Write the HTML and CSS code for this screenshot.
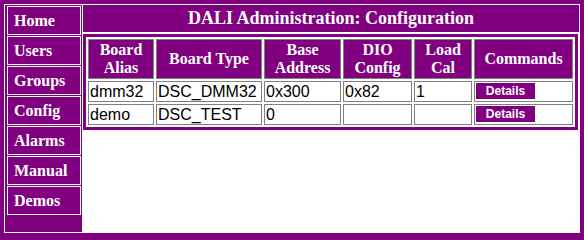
FILE: index.html
```html
<!DOCTYPE html>
<html>
<head>
<meta charset="utf-8">
<title>DALI Administration: Configuration</title>
<link rel="stylesheet" href="styles.css">
</head>
<body>
<div class="frame">
  <nav class="sidebar">
    <a class="item" href="#">Home</a>
    <a class="item" href="#">Users</a>
    <a class="item" href="#">Groups</a>
    <a class="item" href="#">Config</a>
    <a class="item" href="#">Alarms</a>
    <a class="item" href="#">Manual</a>
    <a class="item" href="#">Demos</a>
  </nav>
  <main class="main">
    <h1 class="title">DALI Administration: Configuration</h1>
    <div class="content">
      <table class="grid">
        <thead>
          <tr>
            <th class="c-alias">Board<br>Alias</th>
            <th class="c-type">Board Type</th>
            <th class="c-base">Base<br>Address</th>
            <th class="c-dio">DIO<br>Config</th>
            <th class="c-load">Load<br>Cal</th>
            <th class="c-cmd">Commands</th>
          </tr>
        </thead>
        <tbody>
          <tr>
            <td>dmm32</td>
            <td>DSC_DMM32</td>
            <td>0x300</td>
            <td>0x82</td>
            <td>1</td>
            <td><button class="details" type="button">Details</button></td>
          </tr>
          <tr>
            <td>demo</td>
            <td>DSC_TEST</td>
            <td>0</td>
            <td></td>
            <td></td>
            <td><button class="details" type="button">Details</button></td>
          </tr>
        </tbody>
      </table>
    </div>
  </main>
</div>
</body>
</html>
```

FILE: styles.css
```css
* {
  box-sizing: border-box;
}

html,
body {
  margin: 0;
}

body {
  width: 584px;
  height: 237px;
  padding: 4px;
  background: #800080;
  overflow: hidden;
}

.frame {
  display: flex;
  height: 229px;
  border: 1px solid #ffffff;
  background: #800080;
}

.sidebar {
  flex: none;
  width: 77px;
  padding: 1px 1px 0 2px;
  display: flex;
  flex-direction: column;
  gap: 1px;
}

.item {
  display: block;
  height: 29px;
  padding: 0 6px;
  border: 1px solid #ffffff;
  color: #ffffff;
  text-decoration: none;
  font: bold 16px/27px "Liberation Serif", serif;
}

.main {
  flex: 1;
  display: flex;
  flex-direction: column;
  border-left: 1px solid #ffffff;
}

.title {
  margin: 0;
  height: 27px;
  background: #800080;
  color: #ffffff;
  text-align: center;
  font: bold 18px/27px "Liberation Serif", serif;
}

.content {
  flex: 1;
  background: #ffffff;
  padding: 2px 1px 0 0;
}

.grid {
  width: 100%;
  table-layout: fixed;
  border: 3px solid #800080;
  border-spacing: 2px;
  background: #ffffff;
}

.grid th,
.grid td {
  border: 1px solid #808080;
}

.grid th {
  height: 40px;
  padding: 1px;
  background: #800080;
  color: #ffffff;
  text-align: center;
  vertical-align: middle;
  font: bold 16px/18px "Liberation Serif", serif;
}

.grid td {
  height: 21px;
  padding: 0 1px;
  color: #000000;
  text-align: left;
  vertical-align: top;
  font: 16px/19px "Liberation Sans", sans-serif;
}

.c-alias { width: 66px; }
.c-type { width: 106px; }
.c-base { width: 77px; }
.c-dio { width: 69px; }
.c-load { width: 58px; }
.c-cmd { width: 99px; }

.details {
  display: block;
  width: 59px;
  height: 16px;
  margin-top: 1px;
  padding: 0;
  border: 0;
  background: #800080;
  color: #ffffff;
  text-align: center;
  font: bold 12px/16px "Liberation Sans", sans-serif;
}
```
